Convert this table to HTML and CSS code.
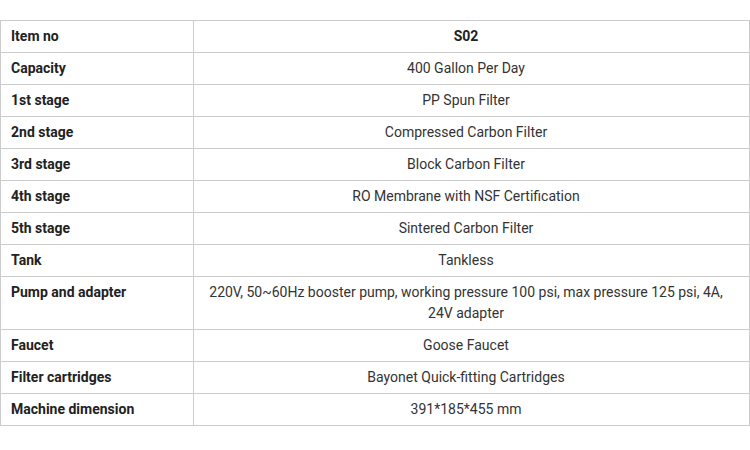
FILE: index.html
```html
<!DOCTYPE html>
<html>
<head>
<meta charset="utf-8">
<link rel="stylesheet" href="styles.css">
</head>
<body>
<table class="spec">
  <colgroup><col class="c1"><col class="c2"></colgroup>
  <tr><th>Item no</th><td class="strong">S02</td></tr>
  <tr><th>Capacity</th><td>400 Gallon Per Day</td></tr>
  <tr><th>1st stage</th><td>PP Spun Filter</td></tr>
  <tr><th>2nd stage</th><td>Compressed Carbon Filter</td></tr>
  <tr><th>3rd stage</th><td>Block Carbon Filter</td></tr>
  <tr><th>4th stage</th><td>RO Membrane with NSF Certification</td></tr>
  <tr><th>5th stage</th><td>Sintered Carbon Filter</td></tr>
  <tr><th>Tank</th><td>Tankless</td></tr>
  <tr><th>Pump and adapter</th><td>220V, 50~60Hz booster pump, working pressure 100 psi, max pressure 125 psi, 4A, 24V adapter</td></tr>
  <tr><th>Faucet</th><td>Goose Faucet</td></tr>
  <tr><th>Filter cartridges</th><td>Bayonet Quick-fitting Cartridges</td></tr>
  <tr><th>Machine dimension</th><td>391*185*455 mm</td></tr>
</table>
</body>
</html>
```
FILE: styles.css
```css
html, body {
  margin: 0;
  padding: 0;
  background: #fff;
}
body {
  padding-top: 20px;
  font-family: Roboto, "Liberation Sans", sans-serif;
  font-size: 14px;
  line-height: 21px;
  color: #333;
}
.spec {
  width: 750px;
  border-collapse: collapse;
  table-layout: fixed;
}
.c1 { width: 193px; }
.spec th, .spec td {
  border: 1px solid #ccc;
  padding: 5px 10px;
  vertical-align: top;
}
.spec th {
  text-align: left;
  font-weight: 700;
  color: #222;
}
.spec td {
  text-align: center;
  font-weight: 400;
  padding-right: 21px;
}
.spec td.strong {
  font-weight: 700;
  color: #222;
}
```
